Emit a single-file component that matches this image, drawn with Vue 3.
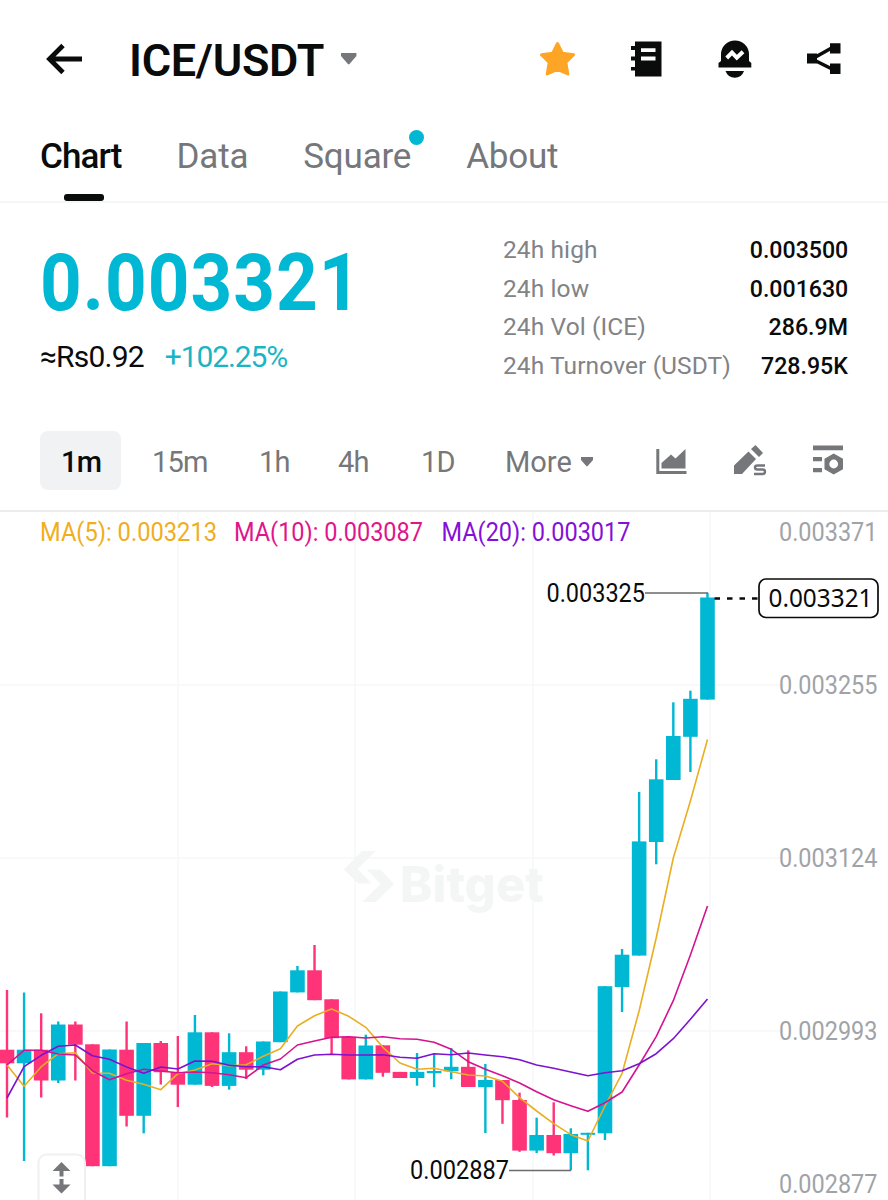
<script setup>
    import { ref } from 'vue'

    const tabs = ['Chart', 'Data', 'Square', 'About']
    const activeTab = ref('Chart')

    const intervals = ['1m', '15m', '1h', '4h', '1D']
    const activeInterval = ref('1m')

    const stats = [
        { label: '24h high', value: '0.003500' },
        { label: '24h low', value: '0.001630' },
        { label: '24h Vol (ICE)', value: '286.9M' },
        { label: '24h Turnover (USDT)', value: '728.95K' }
    ]

    const axis = [
        { y: 541, text: '0.003371' },
        { y: 694, text: '0.003255' },
        { y: 866.5, text: '0.003124' },
        { y: 1040, text: '0.002993' },
        { y: 1193, text: '0.002877' }
    ]

    const legend = [
        { x: 40, w: 177, color: '#f0ae1c', text: 'MA(5): 0.003213' },
        { x: 234, w: 189, color: '#e0148c', text: 'MA(10): 0.003087' },
        { x: 441.5, w: 189, color: '#8410d8', text: 'MA(20): 0.003017' }
    ]

    // [up, wick top, body top, body bottom, wick bottom]
    const candles = [
        [0, 990, 1049.7, 1063.3, 1117.5],
        [1, 992.5, 1049.7, 1063.3, 1161],
        [0, 1013.3, 1049.7, 1080.5, 1097.5],
        [1, 1021.5, 1024.5, 1080.5, 1083],
        [0, 1021.5, 1024.5, 1044.7, 1080.5],
        [0, 1044.3, 1044.3, 1166.2, 1166.2],
        [1, 1049.5, 1049.5, 1166.2, 1166.2],
        [0, 1021.5, 1049.7, 1115.8, 1126.5],
        [1, 1043, 1043, 1115.8, 1133.3],
        [0, 1041, 1043, 1072.2, 1084.5],
        [0, 1036, 1072, 1084.7, 1107],
        [1, 1015, 1032.3, 1084.7, 1084.7],
        [0, 1032.3, 1032.3, 1085.9, 1087],
        [1, 1033.3, 1052.2, 1085.9, 1089.7],
        [0, 1046.3, 1052.2, 1069.7, 1079],
        [1, 1041.5, 1041.5, 1069.7, 1075.3],
        [1, 991.5, 991.5, 1042.2, 1042.2],
        [1, 966, 970.3, 992.4, 992.4],
        [0, 945, 970.3, 1000.2, 1000.2],
        [0, 999.3, 999.3, 1038.2, 1054.7],
        [0, 1036.8, 1036.8, 1079.4, 1079.4],
        [1, 1034.7, 1045.5, 1079.4, 1079.4],
        [0, 1045.3, 1045.3, 1072.8, 1076.7],
        [0, 1071.9, 1071.9, 1078, 1078],
        [1, 1053, 1071.9, 1078, 1085.7],
        [1, 1054, 1071, 1073.2, 1087.2],
        [1, 1048, 1066.8, 1071.3, 1079.2],
        [0, 1050.3, 1066.8, 1087, 1087],
        [1, 1064, 1080, 1087.2, 1133],
        [0, 1080, 1080, 1100.2, 1123.8],
        [0, 1092.7, 1100, 1150.6, 1151.8],
        [1, 1117.7, 1135, 1150.6, 1153],
        [0, 1102.3, 1135, 1153.2, 1155.5],
        [1, 1128.3, 1134, 1153.2, 1170.3],
        [1, 1132.8, 1132.8, 1134.8, 1170.3],
        [1, 986.2, 986.2, 1133.3, 1140],
        [1, 949, 954.7, 987, 1012],
        [1, 792, 841.4, 955.6, 955.6],
        [1, 759.3, 779.3, 842, 864.3],
        [1, 702.3, 736, 780, 780],
        [1, 690.7, 698.8, 736.8, 772],
        [1, 592.8, 597.5, 699.6, 699.6]
    ]

    const averages = [
        {
            color: '#e9ae22',
            values: [1065, 1086.3, 1066.7, 1053.7, 1052.7, 1073, 1073.3, 1080.3, 1084.3, 1089.7, 1073.7, 1070, 1063.7, 1065.7,
                1064.7, 1056.3, 1048.7, 1026, 1015.7, 1009, 1016.3, 1027.3, 1047.3, 1063, 1069.3, 1068.3, 1071.7, 1075, 1076,
                1081.3, 1097.7, 1111, 1123.7, 1134.7, 1141, 1106, 1073.3, 1011, 938, 858, 801, 739.5]
        },
        {
            color: '#d4148e',
            values: [1065, 1050.3, 1050.3, 1054, 1055, 1070.7, 1079.7, 1073.7, 1069.3, 1071, 1072.7, 1072, 1072.7, 1074.7,
                1077.7, 1065, 1059, 1045, 1041, 1037.3, 1036.7, 1038, 1036.7, 1038.7, 1039.3, 1042.3, 1049.3, 1061.7, 1069.3,
                1075.7, 1083, 1091.7, 1099.7, 1105.7, 1111.3, 1102.7, 1092, 1065, 1036.7, 1000.7, 955, 906]
        },
        {
            color: '#7d12d0',
            values: [1098, 1066.7, 1055.3, 1046.3, 1045, 1055.7, 1059.3, 1067, 1073.3, 1067, 1069, 1061, 1061.3, 1065.3,
                1066.7, 1066.7, 1069.7, 1059.3, 1055, 1054.3, 1055, 1055, 1054.7, 1057.3, 1058.3, 1053.7, 1054.7, 1053, 1055,
                1056.7, 1059.7, 1065, 1068.3, 1072, 1075.7, 1072.7, 1070.7, 1063.7, 1053.7, 1038.7, 1019.3, 999]
        }
    ]

    const xAt = i => 7 + i * 17.085
    const toPoints = values => values.map((y, i) => xAt(i).toFixed(1) + ',' + y).join(' ')
</script>

<template>
    <div class="page">
        <header class="topbar">
            <svg class="back" width="38" height="32" viewBox="0 0 38 32">
                <path d="M17 2.500L3.500 16L17 29.500M4 16H36" fill="none" stroke="#0a0b0b" stroke-width="4.800" />
            </svg>
            <h1>ICE/USDT</h1>
            <svg class="caret" width="16" height="12" viewBox="0 0 16 12">
                <path d="M0 0H15.400V3L8.500 11Q7.700 11.800 6.900 11L0 3Z" fill="#75777b" />
            </svg>
            <div class="actions">
                <svg width="36" height="36" viewBox="0 0 36 36">
                    <path d="M18.500 2.500L23.300 12.200L34.500 13.800L26.800 21.500L28.800 33L18.500 28.300L8.200 33L10.200 21.500L2.500 13.800L13.700 12.200Z"
                        fill="#ffa526" stroke="#ffa526" stroke-width="3" stroke-linejoin="round" />
                </svg>
                <svg width="36" height="36" viewBox="0 0 36 36">
                    <path d="M7 .5H33.500V35.500H7V29.500H3V26H7V19.500H3V15.500H7V9H3V5H7Z" fill="#0a0b0b" />
                    <path d="M13 7.200H27.500V11H13ZM13 15.500H27.500V19.500H13Z" fill="#fff" />
                </svg>
                <svg width="36" height="38" viewBox="0 0 36 38">
                    <path d="M4 21V14.500A14 14 0 0 1 32 14.500V21L34.300 23V27.500H1.500V23Z" fill="#0a0b0b" />
                    <path d="M8.500 31H27Q24.500 37.800 17.800 37.800T8.500 31Z" fill="#0a0b0b" />
                    <path d="M9.700 18L15 12.700L19.800 17.700L26 11.700" fill="none" stroke="#fff" stroke-width="4" />
                </svg>
                <svg width="36" height="36" viewBox="0 0 36 36">
                    <path d="M6 18L30 4.500M6 18L30 30" stroke="#0a0b0b" stroke-width="3.600" />
                    <path d="M1 12.500H11V22.500H1ZM24 2.300H34.500V12.500H24ZM24 22.500H34.500V33H24Z" fill="#0a0b0b" />
                </svg>
            </div>
        </header>

        <nav class="tabs">
            <a v-for="tab in tabs" :key="tab" :class="{ active: tab === activeTab }" @click="activeTab = tab">
                {{ tab }}<i v-if="tab === 'Square'" class="dot"></i>
            </a>
        </nav>

        <section class="summary">
            <div class="price">
                <div class="last">0.003321</div>
                <div class="sub"><span class="fiat">≈Rs0.92</span><span class="change">+102.25%</span></div>
            </div>
            <dl class="stats">
                <div v-for="s in stats" :key="s.label">
                    <dt>{{ s.label }}</dt>
                    <dd>{{ s.value }}</dd>
                </div>
            </dl>
        </section>

        <div class="toolbar">
            <button v-for="t in intervals" :key="t" :class="{ active: t === activeInterval }" @click="activeInterval = t">{{ t }}</button>
            <button class="more">
                More
                <svg width="12" height="10" viewBox="0 0 12 10"><path d="M0 0H12V3L6.700 9Q6 9.600 5.300 9L0 3Z" fill="#75777b" /></svg>
            </button>
            <svg width="34" height="36" viewBox="0 0 34 36">
                <path d="M2.800 6V29.500H31.500" fill="none" stroke="#75777b" stroke-width="3" />
                <path d="M6.500 25.500V20L16 11.500L20.500 15.500L30.500 6V25.500Z" fill="#75777b" />
            </svg>
            <svg width="34" height="36" viewBox="0 0 34 36">
                <path d="M1 31V22.500L15.500 8.500L23 16L9 31ZM18 6L22.500 2L30 10L26 14Z" fill="#75777b" />
                <path d="M32 22.500H24.500Q22 22.500 22 24.500T24.500 26.500H29.500Q32 26.500 32 28.700T29.500 31H21" fill="none" stroke="#75777b" stroke-width="2.400" />
            </svg>
            <svg width="34" height="36" viewBox="0 0 34 36">
                <path d="M1 2.500H31V7.300H1ZM1 14H10V18.300H1ZM1 25H10V29.300H1Z" fill="#75777b" />
                <path fill-rule="evenodd" d="M21.700 10.500L31 15.700V26.200L21.700 31.500L12.500 26.200V15.700ZM21.700 16.600A4.400 4.400 0 1 0 21.700 25.400A4.400 4.400 0 1 0 21.700 16.600Z" fill="#75777b" />
            </svg>
        </div>

        <svg class="chart" width="888" height="688" viewBox="0 512 888 688">
            <g stroke="#f6f7f8" stroke-width="1.500">
                <path v-for="x in [178, 355, 533, 710]" :key="x" :d="`M${x} 512V1200`" />
                <path v-for="y in [685, 858, 1031]" :key="y" :d="`M0 ${y}H780`" />
            </g>

            <!-- watermark -->
            <g fill="#f4f5f5">
                <path d="M362 851H375.500L357.500 869L371.500 883.500H358.500L344 869.500ZM367 869.500H380.500L394 884L376 902H362.500L380.500 884Z" />
                <text x="400" y="902" class="brand" textLength="144" lengthAdjust="spacingAndGlyphs">Bitget</text>
            </g>

            <g v-for="(c, i) in candles" :key="i" :fill="c[0] ? '#00b8d4' : '#ff3377'">
                <rect :x="xAt(i) - 1.200" :y="c[1]" width="2.400" :height="c[4] - c[1]" />
                <rect :x="xAt(i) - 7.300" :y="c[2]" width="14.600" :height="c[3] - c[2]" />
            </g>

            <polyline v-for="ma in averages" :key="ma.color" :points="toPoints(ma.values)" :stroke="ma.color"
                fill="none" stroke-width="1.600" stroke-linejoin="round" />

            <text v-for="l in legend" :key="l.text" :x="l.x" y="541" :fill="l.color" :textLength="l.w" lengthAdjust="spacingAndGlyphs">{{ l.text }}</text>
            <text v-for="a in axis" :key="a.text" x="779" :y="a.y" fill="#a0a3a7" textLength="98.500" lengthAdjust="spacingAndGlyphs">{{ a.text }}</text>

            <!-- high and low markers -->
            <path d="M645 593H708M509 1170.500H571" stroke="#6b6b6b" stroke-width="1.500" />
            <text x="546.500" y="602" fill="#0a0b0b" textLength="98.500" lengthAdjust="spacingAndGlyphs">0.003325</text>
            <text x="410" y="1179" fill="#0a0b0b" textLength="99" lengthAdjust="spacingAndGlyphs">0.002887</text>

            <path d="M714.500 598.500H758" stroke="#0a0b0b" stroke-width="2.400" stroke-dasharray="5.500 7" />
            <rect x="759" y="579" width="119" height="38.500" rx="7" fill="#fff" stroke="#0a0b0b" stroke-width="1.700" />
            <text x="768.500" y="607" fill="#0a0b0b" class="tag" textLength="104" lengthAdjust="spacingAndGlyphs">0.003321</text>

            <!-- resize handle -->
            <rect x="38.500" y="1154.500" width="46.500" height="60" rx="8" fill="#fff" stroke="#eff0f1" stroke-width="2" />
            <path d="M61.500 1162L70.500 1171H63.500V1176.500H59.500V1171H52.500ZM59.500 1179H63.500V1184.500H70.500L61.500 1193.500L52.500 1184.500H59.500Z" fill="#75777b" />
        </svg>
    </div>
</template>

<style>
    body {
        background: #fff;
    }
</style>

<style scoped>
    .page {
        width: 888px;
        height: 1200px;
        overflow: hidden;
        background: #fff;
        color: #0a0b0b;
        font-family: Roboto, "Liberation Sans", sans-serif;
    }

    .topbar {
        display: flex;
        align-items: center;
        height: 120px;
        box-sizing: border-box;
        padding: 0 46px 2px 46px;
    }

    h1 {
        margin: 3px 0 0 45px;
        font-size: 45px;
        font-weight: 600;
        line-height: 60px;
        letter-spacing: -0.3px;
    }

    .caret {
        margin-left: 17px;
    }

    .actions {
        display: flex;
        align-items: center;
        gap: 53px;
        margin-left: auto;
    }

    .tabs {
        display: flex;
        gap: 55px;
        height: 81px;
        padding-left: 41px;
        border-bottom: 2px solid #f5f6f7;
        font-size: 35px;
        line-height: 74px;
        letter-spacing: -0.2px;
        color: #75777b;
    }

    .tabs a {
        position: relative;
        cursor: pointer;
    }

    .tabs .active {
        margin-left: -1px;
        color: #0a0b0b;
        font-weight: 500;
        letter-spacing: -0.9px;
    }

    .tabs .active::after {
        content: "";
        position: absolute;
        left: 24px;
        bottom: 0;
        width: 40px;
        height: 7px;
        border-radius: 3px;
        background: #0a0b0b;
    }

    .dot {
        position: absolute;
        right: -13px;
        top: 10px;
        width: 15px;
        height: 15px;
        border-radius: 50%;
        background: #00b8d4;
    }

    .summary {
        display: flex;
        justify-content: space-between;
        height: 228px;
        box-sizing: border-box;
        padding: 28px 40px 0;
    }

    .price {
        width: 320px;
    }

    .last {
        color: #00b8d4;
        font-size: 80px;
        font-weight: 700;
        line-height: 105px;
        letter-spacing: 1.1px;
        transform: scaleX(0.91);
        transform-origin: left;
    }

    .sub {
        display: flex;
        gap: 21px;
        font-size: 30px;
        line-height: 41px;
    }

    .fiat {
        letter-spacing: -0.8px;
    }

    .change {
        color: #19b5c4;
        letter-spacing: -1.1px;
    }

    .stats {
        width: 345px;
        margin: 0;
        font-size: 24.5px;
        line-height: 38.7px;
    }

    .stats div {
        display: flex;
        justify-content: space-between;
    }

    dt {
        color: #818386;
        letter-spacing: 0.1px;
    }

    dd {
        margin: 0;
        font-weight: 500;
        transform: scaleX(0.945);
        transform-origin: right;
    }

    .toolbar {
        display: grid;
        grid-template-columns: 81px 107px 79px 83px 83px 182px 78px 79px 34px;
        align-items: center;
        height: 81px;
        box-sizing: border-box;
        padding: 0 0 20px 40px;
        border-bottom: 2px solid #ebecec;
    }

    .toolbar button {
        height: 59px;
        padding: 0;
        border: 0;
        border-radius: 8px;
        background: none;
        color: #75777b;
        font-family: inherit;
        font-size: 29px;
        line-height: 62px;
        letter-spacing: -0.8px;
        text-align: left;
        padding-left: 31px;
    }

    .toolbar .active {
        padding-left: 21px;
        background: #f1f2f4;
        color: #0a0b0b;
        font-weight: 500;
    }

    .toolbar .more {
        display: flex;
        align-items: center;
        gap: 9px;
        padding: 2px 0 0 32px;
        letter-spacing: 0;
    }

    .chart {
        display: block;
    }

    .chart text {
        font-size: 25.5px;
    }

    .chart .tag {
        font-family: "Noto Sans", sans-serif;
        font-size: 25px;
    }

    .chart .brand {
        font-family: Inter, sans-serif;
        font-size: 49px;
        font-weight: 800;
    }
</style>
